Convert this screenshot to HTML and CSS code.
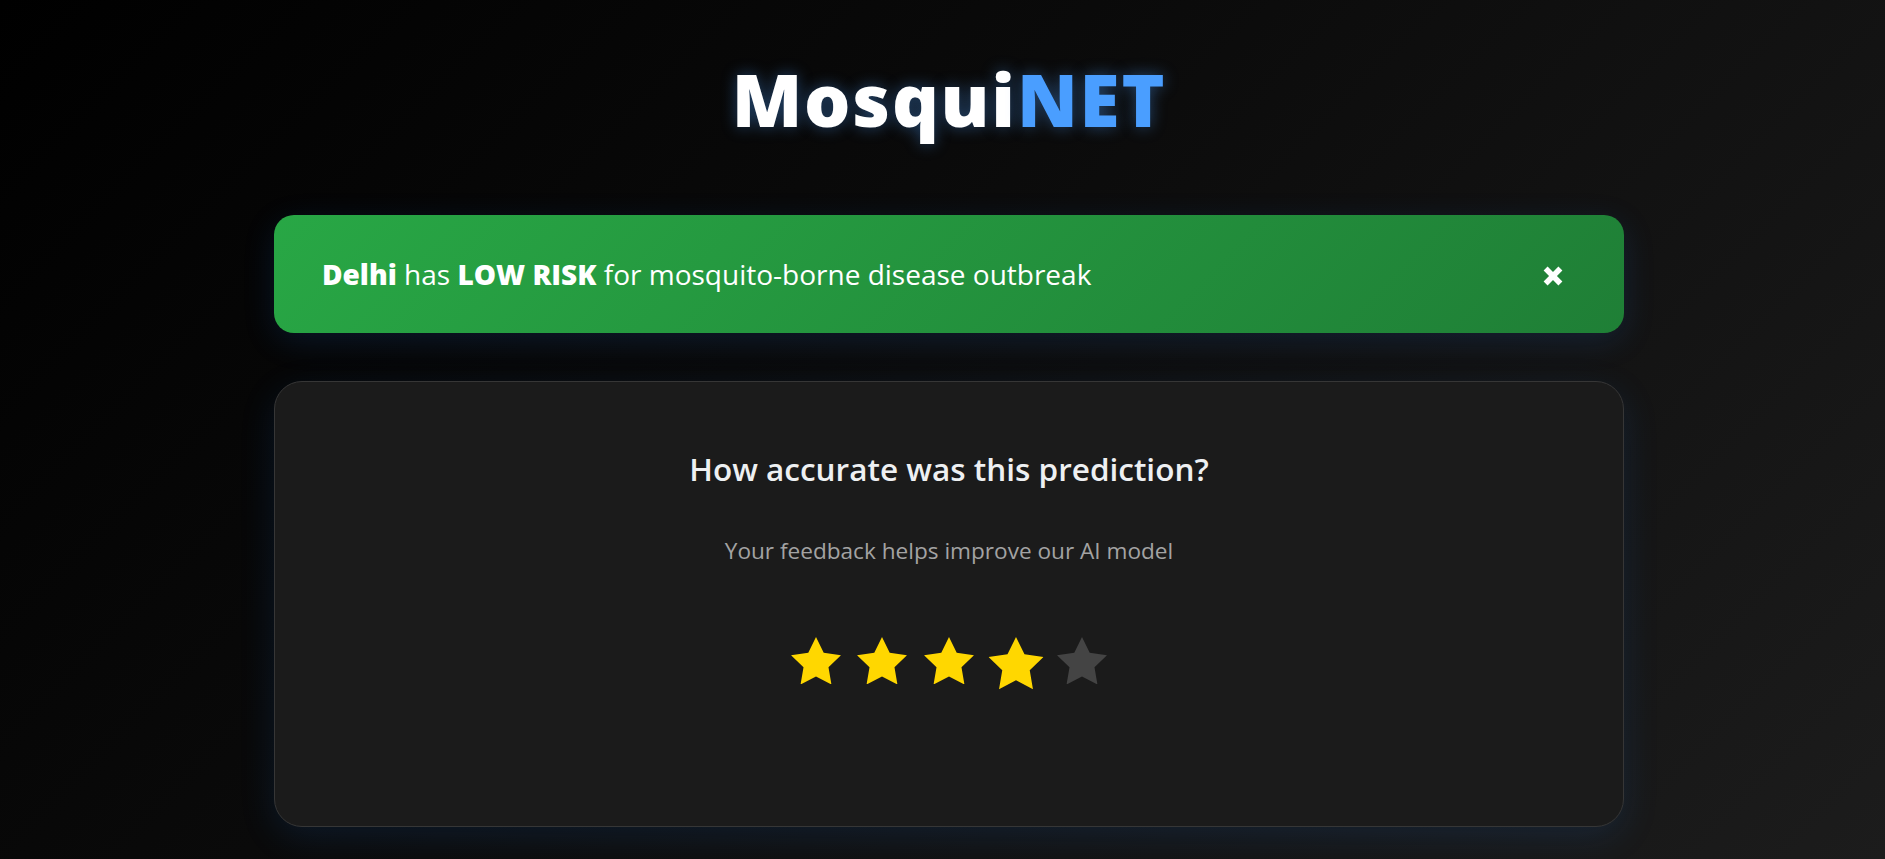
FILE: index.html
```html
<!DOCTYPE html>
<html lang="en">
<head>
<meta charset="utf-8">
<title>MosquiNET</title>
<link rel="stylesheet" href="styles.css">
</head>
<body>
<main class="page">
  <h1 class="brand">Mosqui<span class="brand-accent">NET</span></h1>

  <div class="alert">
    <p class="alert-text"><strong>Delhi</strong> has <strong>LOW RISK</strong> for mosquito-borne disease outbreak</p>
    <button class="alert-close" type="button" aria-label="Close">
      <svg viewBox="0 0 20 20" width="20" height="20" aria-hidden="true">
        <path d="M2.6 2.6 L17.4 17.4 M17.4 2.6 L2.6 17.4" stroke="#fff" stroke-width="5.6" fill="none"/>
      </svg>
    </button>
  </div>

  <section class="card">
    <h2 class="card-title">How accurate was this prediction?</h2>
    <p class="card-sub">Your feedback helps improve our AI model</p>
    <div class="stars">
      <svg class="star star-on" viewBox="2 2 20 19.02" width="50" height="47.5"><polygon points="12,2 15.09,8.26 22,9.27 17,14.14 18.18,21.02 12,17.77 5.82,21.02 7,14.14 2,9.27 8.91,8.26"/></svg>
      <svg class="star star-on" viewBox="2 2 20 19.02" width="50" height="47.5"><polygon points="12,2 15.09,8.26 22,9.27 17,14.14 18.18,21.02 12,17.77 5.82,21.02 7,14.14 2,9.27 8.91,8.26"/></svg>
      <svg class="star star-on" viewBox="2 2 20 19.02" width="50" height="47.5"><polygon points="12,2 15.09,8.26 22,9.27 17,14.14 18.18,21.02 12,17.77 5.82,21.02 7,14.14 2,9.27 8.91,8.26"/></svg>
      <svg class="star star-on star-hover" viewBox="2 2 20 19.02" width="50" height="47.5"><polygon points="12,2 15.09,8.26 22,9.27 17,14.14 18.18,21.02 12,17.77 5.82,21.02 7,14.14 2,9.27 8.91,8.26"/></svg>
      <svg class="star star-off" viewBox="2 2 20 19.02" width="50" height="47.5"><polygon points="12,2 15.09,8.26 22,9.27 17,14.14 18.18,21.02 12,17.77 5.82,21.02 7,14.14 2,9.27 8.91,8.26"/></svg>
    </div>
  </section>
</main>
</body>
</html>
```

FILE: styles.css
```css
* {
  box-sizing: border-box;
}

html, body {
  margin: 0;
  height: 100%;
}

body {
  background: linear-gradient(135deg, #000000 0%, #0a0a0a 40%, #1c1c1c 100%);
  font-family: "Open Sans", "Noto Sans", sans-serif;
  color: #fff;
  overflow: hidden;
}

.page {
  display: flex;
  flex-direction: column;
  align-items: center;
  padding: 55px 0 0 13px;
}

.brand {
  margin: 0;
  font-size: 73px;
  line-height: 1.2;
  font-weight: 800;
  color: #fff;
  letter-spacing: 1.8px;
  text-shadow: 0 0 16px rgba(74, 158, 255, 0.4);
}

.brand-accent {
  color: #4a9eff;
}

.alert {
  margin-top: 72.6px;
  width: 1350px;
  height: 118px;
  display: flex;
  align-items: center;
  justify-content: space-between;
  padding: 0 61px 0 48px;
  border-radius: 20px;
  background: linear-gradient(135deg, #28a745 0%, #1f7f36 100%);
  box-shadow: 0 8px 32px rgba(30, 110, 220, 0.16);
}

.alert-text {
  margin: 0;
  font-size: 28px;
  line-height: 1.5;
  color: #fff;
}

.alert-text strong {
  font-weight: 800;
}

.alert-close {
  display: flex;
  padding: 0;
  margin: 4px 0 0;
  border: 0;
  background: none;
  cursor: pointer;
}

.card {
  margin-top: 48px;
  width: 1350px;
  height: 446px;
  padding: 68px 40px 0;
  background: #1b1b1b;
  border: 1px solid #363636;
  border-radius: 28px;
  box-shadow: 0 10px 36px rgba(30, 110, 220, 0.14);
  display: flex;
  flex-direction: column;
  align-items: center;
}

.card-title {
  margin: 0;
  font-size: 31.5px;
  line-height: 1.2;
  font-weight: 600;
  color: #eef0f2;
}

.card-sub {
  margin: 46px 0 0;
  font-size: 22.6px;
  line-height: 1.5;
  color: #a3a3a3;
}

.stars {
  margin-top: 68.7px;
  display: flex;
  gap: 16.7px;
}

.star {
  display: block;
}

.star-on {
  fill: #ffd700;
}

.star-off {
  fill: #444444;
}

.star-hover {
  transform: scale(1.1);
  transform-origin: 50% 0;
}
```
